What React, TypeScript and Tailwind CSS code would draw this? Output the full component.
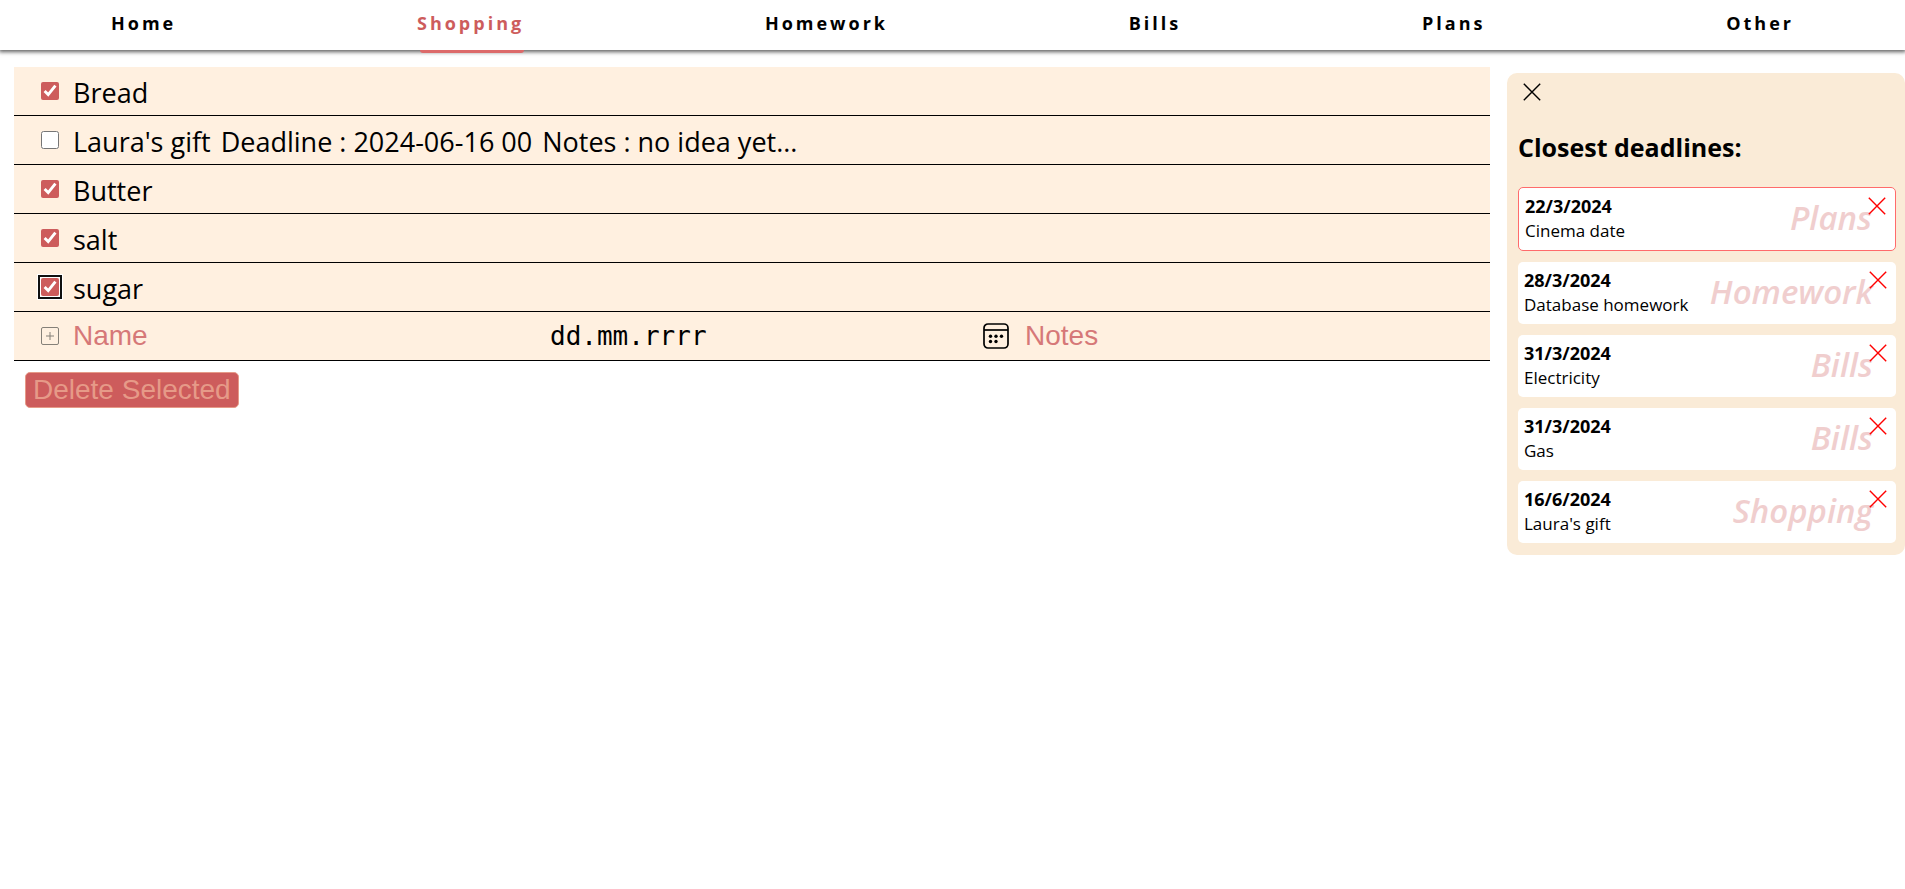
import { useState } from "react";

const tabs = ["Home", "Shopping", "Homework", "Bills", "Plans", "Other"];

type Item = { name: string; details: string[]; done: boolean };

const initialItems: Item[] = [
  { name: "Bread", details: [], done: true },
  { name: "Laura's gift", details: ["Deadline : 2024-06-16 00", "Notes : no idea yet..."], done: false },
  { name: "Butter", details: [], done: true },
  { name: "salt", details: [], done: true },
  { name: "sugar", details: [], done: true },
];

const deadlines = [
  { date: "22/3/2024", title: "Cinema date", category: "Plans", urgent: true },
  { date: "28/3/2024", title: "Database homework", category: "Homework", urgent: false },
  { date: "31/3/2024", title: "Electricity", category: "Bills", urgent: false },
  { date: "31/3/2024", title: "Gas", category: "Bills", urgent: false },
  { date: "16/6/2024", title: "Laura's gift", category: "Shopping", urgent: false },
];

function CrossIcon() {
  return (
    <svg viewBox="0 0 18 18" className="size-[18px]" fill="none" stroke="currentColor" strokeWidth="1.4" aria-hidden="true">
      <path d="M0.8 0.8 17.2 17.2M17.2 0.8 0.8 17.2" />
    </svg>
  );
}

function CalendarIcon() {
  return (
    <svg viewBox="0 0 26 26" className="size-[26px]" fill="none" stroke="#000" strokeWidth="1.7" aria-hidden="true">
      <rect x="1" y="1" width="24" height="24" rx="4" />
      <path d="M1 7H25" />
      <g fill="#000" stroke="none">
        <circle cx="7.5" cy="13.2" r="1.7" />
        <circle cx="13" cy="13.2" r="1.7" />
        <circle cx="18.5" cy="13.2" r="1.7" />
        <circle cx="7.5" cy="18.5" r="1.7" />
        <circle cx="13" cy="18.5" r="1.7" />
      </g>
    </svg>
  );
}

function NavBar() {
  return (
    <nav className="flex h-[50px] justify-between bg-white px-[111px] shadow-[0_1px_4px_1px_#000000a0]">
      {tabs.map((tab) => (
        <a
          key={tab}
          href={"#" + tab.toLowerCase()}
          className={
            tab === "Shopping"
              ? "relative text-[18px] leading-[46px] font-bold tracking-[3px] text-[#cd5c5c] after:absolute after:top-[50px] after:right-0 after:left-[3px] after:h-[3px] after:rounded-b-sm after:bg-[#dc6a6a] after:content-['']"
              : "text-[18px] leading-[46px] font-bold tracking-[3px] text-black"
          }
        >
          {tab}
        </a>
      ))}
    </nav>
  );
}

function ShoppingList() {
  const [items, setItems] = useState(initialItems);
  const toggle = (index: number) =>
    setItems(items.map((item, i) => (i === index ? { ...item, done: !item.done } : item)));

  return (
    <main className="min-w-0 flex-1 pt-[17px] pl-3.5">
      <ul>
        {items.map((item, i) => (
          <li key={item.name} className="h-[49px] border-b border-black bg-[#fff0e0] pt-[3px] pl-[27px]">
            <label className="flex gap-3.5">
              <input
                type="checkbox"
                checked={item.done}
                onChange={() => toggle(i)}
                className={
                  i === 4
                    ? "mt-3 size-[18px] shrink-0 rounded-[3px] accent-[#cd5c5c] ring-4 ring-white outline-2 outline-offset-1 outline-[#101010]"
                    : "mt-3 size-[18px] shrink-0 accent-[#cd5c5c]"
                }
              />
              <span className="flex gap-2.5 text-[27px] leading-[46px]">
                <span>{item.name}</span>
                {item.details.map((detail) => (
                  <span key={detail}>{detail}</span>
                ))}
              </span>
            </label>
          </li>
        ))}
        <li className="flex h-[49px] items-center gap-3.5 border-b border-black bg-[#fff0e0] pl-[27px]">
          <button
            type="button"
            aria-label="Add item"
            className="flex size-[18px] shrink-0 items-center justify-center rounded-xs border border-[#858078] text-[#858078]"
          >
            <svg viewBox="0 0 8 8" className="size-2" stroke="currentColor" aria-hidden="true">
              <path d="M4 0V8M0 4H8" />
            </svg>
          </button>
          <div className="grid flex-1 grid-cols-3 gap-2">
            <input
              aria-label="Name"
              placeholder="Name"
              className="h-8 min-w-0 bg-transparent font-['Liberation_Sans',sans-serif] text-[28px] leading-8 outline-none placeholder:text-[#d67878] placeholder:opacity-100"
            />
            <div className="flex items-center justify-between pr-1.5 pl-0.5">
              <input
                aria-label="Deadline"
                placeholder="dd.mm.rrrr"
                className="h-8 min-w-0 flex-1 bg-transparent font-['DejaVu_Sans_Mono',monospace] text-[26px] leading-8 outline-none placeholder:text-black placeholder:opacity-100"
              />
              <button type="button" aria-label="Pick a date">
                <CalendarIcon />
              </button>
            </div>
            <input
              aria-label="Notes"
              placeholder="Notes"
              className="h-8 min-w-0 bg-transparent pl-0.5 font-['Liberation_Sans',sans-serif] text-[28px] leading-8 outline-none placeholder:text-[#d67878] placeholder:opacity-100"
            />
          </div>
        </li>
      </ul>
      <button
        type="button"
        onClick={() => setItems(items.filter((item) => !item.done))}
        className="mt-[11px] ml-[11px] h-9 rounded-[5px] border border-[#e69a88] bg-[#cd5c5c] px-[7px] font-['Liberation_Sans',sans-serif] text-[28px] leading-8 text-[#e69a88]"
      >
        Delete Selected
      </button>
    </main>
  );
}

function Deadlines() {
  return (
    <aside className="mt-[23px] w-[398px] shrink-0 rounded-[10px] bg-[#faebd7] pr-[9px] pb-3 pl-[11px]">
      <button type="button" aria-label="Close panel" className="mt-2.5 ml-[5px] block text-black">
        <CrossIcon />
      </button>
      <h2 className="mt-[26px] text-[25px] leading-10 font-bold">Closest deadlines:</h2>
      <ul className="mt-5 flex flex-col gap-[11px]">
        {deadlines.map((d) => (
          <li
            key={d.date + d.title}
            className={
              d.urgent
                ? "relative rounded-[5px] border border-[#ff6b6b] bg-white px-1.5 py-[7px]"
                : "relative rounded-[5px] bg-white px-1.5 py-[7px]"
            }
          >
            <p className="mb-0.5 text-[18px] leading-[22px] font-bold">{d.date}</p>
            <p className="text-[17px] leading-6">{d.title}</p>
            <span className="absolute top-2 right-[23px] text-[33px] leading-[44px] font-semibold text-[#f0cece] italic">
              {d.category}
            </span>
            <button
              type="button"
              aria-label={"Dismiss " + d.title}
              className="absolute top-[9px] right-[9px] text-[#ff0000]"
            >
              <CrossIcon />
            </button>
          </li>
        ))}
      </ul>
    </aside>
  );
}

export default function App() {
  return (
    <div className="min-h-screen bg-white font-['Open_Sans','Noto_Sans',sans-serif] text-black">
      <NavBar />
      <div className="flex items-start gap-[17px]">
        <ShoppingList />
        <Deadlines />
      </div>
    </div>
  );
}
